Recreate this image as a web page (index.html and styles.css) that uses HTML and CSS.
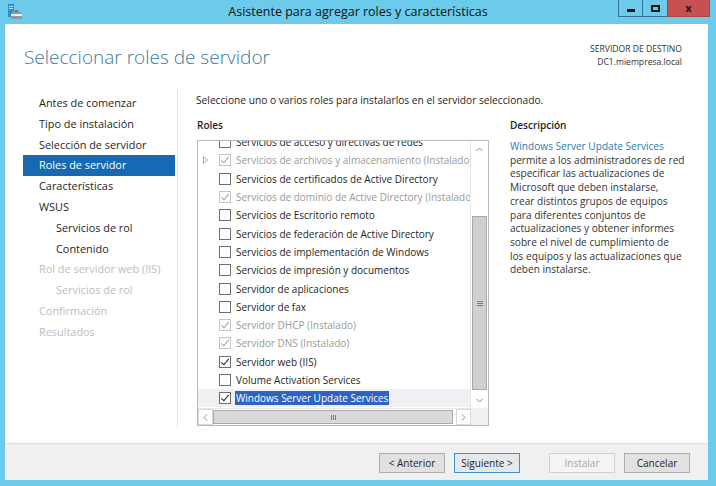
FILE: index.html
```html
<!DOCTYPE html>
<html lang="es">
<head>
    <meta charset="UTF-8">
    <title>Asistente para agregar roles y características</title>
    <link rel="stylesheet" href="styles.css">
</head>
<body>
    <div class="window">
        <div class="titlebar">
            <svg class="app-icon" width="17" height="17" viewBox="0 0 17 17">
                <rect x="2" y="1" width="6" height="13" fill="#2b8fd6"/>
                <rect x="3" y="3" width="4" height="1" fill="#bfe3f7"/>
                <rect x="3" y="5" width="4" height="1" fill="#bfe3f7"/>
                <path d="M5 16 V12 Q5 8 10.5 8 Q16 8 16 12 V16 Z" fill="#8d99a4"/>
                <rect x="5" y="11" width="11" height="2" fill="#e9eef2"/>
                <rect x="9" y="7" width="3" height="2" fill="#6d7882"/>
            </svg>
            <div class="title">Asistente para agregar roles y características</div>
            <div class="controls">
                <span class="ctl min"><i></i></span>
                <span class="ctl max"><i></i></span>
                <span class="ctl close">x</span>
            </div>
        </div>

        <div class="client">
            <div class="header">
                <h1>Seleccionar roles de servidor</h1>
                <div class="dest">
                    <div>SERVIDOR DE DESTINO</div>
                    <div>DC1.miempresa.local</div>
                </div>
            </div>

            <div class="main">
                <ul class="steps">
                    <li>Antes de comenzar</li>
                    <li>Tipo de instalación</li>
                    <li>Selección de servidor</li>
                    <li class="active">Roles de servidor</li>
                    <li>Características</li>
                    <li>WSUS</li>
                    <li class="sub">Servicios de rol</li>
                    <li class="sub">Contenido</li>
                    <li class="off">Rol de servidor web (IIS)</li>
                    <li class="sub off">Servicios de rol</li>
                    <li class="off">Confirmación</li>
                    <li class="off">Resultados</li>
                </ul>

                <div class="content">
                    <p class="intro">Seleccione uno o varios roles para instalarlos en el servidor seleccionado.</p>
                    <div class="columns">
                        <div class="roles">
                            <h2>Roles</h2>
                            <div class="listbox">
                                <div class="viewport">
                                    <ul class="role-list">
                                        <li><span class="exp"></span><span class="box"></span><span class="label">Servicios de acceso y directivas de redes</span></li>
                                        <li class="installed"><span class="exp"><svg width="5" height="8" viewBox="0 0 5 8"><path d="M0.5 0.5 L4.5 4 L0.5 7.5 Z" fill="none" stroke="#a6a6a6"/></svg></span><span class="box on"></span><span class="label">Servicios de archivos y almacenamiento (Instalado)</span></li>
                                        <li><span class="exp"></span><span class="box"></span><span class="label">Servicios de certificados de Active Directory</span></li>
                                        <li class="installed"><span class="exp"></span><span class="box on"></span><span class="label">Servicios de dominio de Active Directory (Instalado)</span></li>
                                        <li><span class="exp"></span><span class="box"></span><span class="label">Servicios de Escritorio remoto</span></li>
                                        <li><span class="exp"></span><span class="box"></span><span class="label">Servicios de federación de Active Directory</span></li>
                                        <li><span class="exp"></span><span class="box"></span><span class="label">Servicios de implementación de Windows</span></li>
                                        <li><span class="exp"></span><span class="box"></span><span class="label">Servicios de impresión y documentos</span></li>
                                        <li><span class="exp"></span><span class="box"></span><span class="label">Servidor de aplicaciones</span></li>
                                        <li><span class="exp"></span><span class="box"></span><span class="label">Servidor de fax</span></li>
                                        <li class="installed"><span class="exp"></span><span class="box on"></span><span class="label">Servidor DHCP (Instalado)</span></li>
                                        <li class="installed"><span class="exp"></span><span class="box on"></span><span class="label">Servidor DNS (Instalado)</span></li>
                                        <li><span class="exp"></span><span class="box on"></span><span class="label">Servidor web (IIS)</span></li>
                                        <li><span class="exp"></span><span class="box"></span><span class="label">Volume Activation Services</span></li>
                                        <li class="current"><span class="exp"></span><span class="box on"></span><span class="label">Windows Server Update Services</span></li>
                                    </ul>
                                </div>
                                <div class="vscroll">
                                    <span class="arrow">
                                        <svg width="7" height="5" viewBox="0 0 7 5"><path d="M0.5 4 L3.5 1 L6.5 4" fill="none" stroke="#8a8a8a"/></svg>
                                    </span>
                                    <span class="track-top"></span>
                                    <span class="vthumb"><i></i><i></i><i></i></span>
                                    <span class="track-end"></span>
                                    <span class="arrow">
                                        <svg width="7" height="5" viewBox="0 0 7 5"><path d="M0.5 1 L3.5 4 L6.5 1" fill="none" stroke="#8a8a8a"/></svg>
                                    </span>
                                </div>
                                <div class="hscroll">
                                    <span class="arrow">
                                        <svg width="5" height="7" viewBox="0 0 5 7"><path d="M4 0.5 L1 3.5 L4 6.5" fill="none" stroke="#8a8a8a"/></svg>
                                    </span>
                                    <span class="hthumb"><i></i><i></i><i></i></span>
                                    <span class="track-end"></span>
                                    <span class="arrow">
                                        <svg width="5" height="7" viewBox="0 0 5 7"><path d="M1 0.5 L4 3.5 L1 6.5" fill="none" stroke="#8a8a8a"/></svg>
                                    </span>
                                </div>
                                <div class="corner"></div>
                            </div>
                        </div>

                        <div class="desc">
                            <h2>Descripción</h2>
                            <p><span class="link">Windows Server Update Services</span><br>
                            permite a los administradores de red<br>
                            especificar las actualizaciones de<br>
                            Microsoft que deben instalarse,<br>
                            crear distintos grupos de equipos<br>
                            para diferentes conjuntos de<br>
                            actualizaciones y obtener informes<br>
                            sobre el nivel de cumplimiento de<br>
                            los equipos y las actualizaciones que<br>
                            deben instalarse.</p>
                        </div>
                    </div>
                </div>
            </div>

            <div class="footer">
                <button class="btn">&lt; Anterior</button>
                <button class="btn default">Siguiente &gt;</button>
                <button class="btn install" disabled>Instalar</button>
                <button class="btn">Cancelar</button>
            </div>
        </div>
    </div>
</body>
</html>
```

FILE: styles.css
```css
:root {
    --frame: #6ccbeb;
    --heading: #3a7b9d;
    --selected: #1669b2;
    --text: #1e1e1e;
    --muted: #a8a8a8;
    --ui-font: "Segoe UI", "Open Sans", sans-serif;
}

* {
    box-sizing: border-box;
    margin: 0;
    padding: 0;
}

body {
    background: var(--frame);
    font-family: var(--ui-font);
    color: var(--text);
}

.window {
    display: flex;
    flex-direction: column;
    height: 486px;
}

/* title bar */

.titlebar {
    display: grid;
    grid-template-columns: 1fr auto 1fr;
    height: 24px;
}

.app-icon {
    margin: 3px 0 0 6px;
}

.title {
    font-size: 12.5px;
    line-height: 24px;
    color: #111;
}

.controls {
    justify-self: end;
    display: flex;
    height: 17px;
    margin-right: 6px;
}

.ctl {
    display: flex;
    justify-content: center;
    align-items: center;
    width: 25px;
    border: 1px solid #33728f;
    border-top: none;
}

.ctl + .ctl {
    border-left: none;
}

.min i {
    width: 8px;
    height: 3px;
    margin-top: 4px;
    background: #111;
}

.max i {
    width: 9px;
    height: 7px;
    border: 2px solid #111;
}

.close {
    width: 42px;
    background: #c75050;
    border-color: #b04545;
    font-size: 11px;
    font-weight: bold;
    color: #1a1a1a;
    line-height: 1;
    padding-bottom: 2px;
}

/* client area */

.client {
    flex: 1;
    display: flex;
    flex-direction: column;
    margin: 0 8px 6px 5px;
    background: #fff;
}

.header {
    display: flex;
    justify-content: space-between;
    align-items: flex-start;
    height: 64px;
    padding: 19px 26px 0 19px;
}

.header h1 {
    margin-top: 2px;
    font-size: 19px;
    font-weight: 300;
    line-height: 24px;
    color: var(--heading);
}

.dest {
    text-align: right;
    font-size: 8.6px;
    line-height: 13px;
    color: #333;
}

.main {
    flex: 1;
    display: flex;
    padding: 2px 0 16px;
}

.steps {
    list-style: none;
    width: 173px;
    padding: 3px 0 0 18px;
    border-right: 1px solid #e2e2e2;
    font-size: 10.9px;
}

.steps li {
    height: 20.8px;
    line-height: 20.8px;
    margin-right: 2px;
    padding-left: 16px;
    white-space: nowrap;
}

.steps li.sub {
    padding-left: 33px;
}

.steps li.active {
    background: var(--selected);
    color: #fff;
}

.steps li.off {
    color: #bdbdbd;
}

.content {
    flex: 1;
    padding: 2px 0 0 18px;
    font-size: 10px;
}

.intro {
    font-size: 10.2px;
    line-height: 16px;
}

.columns {
    display: flex;
    gap: 21px;
    margin-top: 9px;
}

.columns h2 {
    font-size: 10px;
    font-weight: 600;
    line-height: 16px;
    margin-bottom: 7px;
}

.roles {
    width: 293px;
}

.roles h2 {
    padding-left: 1px;
}

/* role list box */

.listbox {
    display: grid;
    grid-template-columns: 1fr 17px;
    grid-template-rows: 1fr 17px;
    height: 286px;
    margin-left: 1px;
    border: 1px solid #b9b9b9;
}

.viewport {
    overflow: hidden;
    border-right: 1px solid #e6e6e6;
}

.role-list {
    list-style: none;
    margin-top: -8px;
}

.role-list li {
    display: flex;
    align-items: center;
    height: 18.3px;
    white-space: nowrap;
}

.role-list li.installed {
    color: #9a9a9a;
}

.role-list li.current {
    background: #eef0f3;
}

.exp {
    display: flex;
    flex: none;
    align-items: center;
    justify-content: center;
    width: 12px;
    margin-left: 1px;
}

.box {
    position: relative;
    flex: none;
    width: 12px;
    height: 12px;
    margin: 0 5px 0 8px;
    border: 1px solid #6f6f6f;
    background: #fff;
}

.installed .box {
    border-color: #c4c4c4;
}

.box.on::after {
    content: '';
    position: absolute;
    left: 3px;
    top: 0;
    width: 3px;
    height: 7px;
    border: solid #222;
    border-width: 0 1.6px 1.6px 0;
    transform: rotate(40deg);
}

.installed .box.on::after {
    border-color: #a0a0a0;
    border-width: 0 1.3px 1.3px 0;
}

.current .label {
    background: #2f63c2;
    color: #fff;
    padding: 0 1px;
    margin-left: -1px;
    line-height: 14px;
}

/* scroll bars */

.vscroll {
    display: flex;
    flex-direction: column;
    background: #fff;
}

.vscroll .arrow {
    display: flex;
    align-items: center;
    justify-content: center;
    height: 16px;
}

.track-top {
    height: 59px;
}

.vthumb {
    flex: 1;
    display: flex;
    flex-direction: column;
    justify-content: center;
    align-items: center;
    gap: 1px;
    margin: 0 1px;
    background: #d0d0d0;
    border: 1px solid #a9a9a9;
}

.vthumb i {
    width: 6px;
    height: 1px;
    background: #7d7d7d;
}

.vscroll .track-end {
    height: 2px;
}

.hscroll {
    display: flex;
    border-top: 1px solid #e6e6e6;
    background: #fff;
}

.hscroll .arrow {
    display: flex;
    align-items: center;
    justify-content: center;
    width: 15px;
    border: 1px solid #dadada;
}

.hthumb {
    flex: 1;
    display: flex;
    justify-content: center;
    align-items: center;
    gap: 1px;
    margin: 1px 0;
    background: #dadada;
    border: 1px solid #a9a9a9;
}

.hthumb i {
    width: 1px;
    height: 5px;
    background: #7d7d7d;
}

.hscroll .track-end {
    width: 3px;
}

.corner {
    background: #f0f0f0;
}

/* description */

.desc {
    width: 190px;
}

.desc p {
    font-size: 10.1px;
    line-height: 13.7px;
    color: #333;
    white-space: nowrap;
}

.desc .link {
    color: #2e7bab;
}

/* footer */

.footer {
    display: flex;
    justify-content: flex-end;
    height: 37px;
    padding: 9px 18px 0 0;
    border-top: 1px solid #dcdcdc;
    background: #f0f0f0;
}

.btn {
    width: 66px;
    height: 20px;
    margin-left: 9px;
    border: 1px solid #adadad;
    background: #e1e1e1;
    font-family: var(--ui-font);
    font-size: 10px;
    color: #1e1e1e;
}

.btn.default {
    border-color: #3c8fd0;
    background: #e5e9ee;
}

.btn.install {
    margin-left: 29px;
    border-color: #d0d0d0;
    background: #f4f4f4;
    color: #a6a6a6;
}
```
